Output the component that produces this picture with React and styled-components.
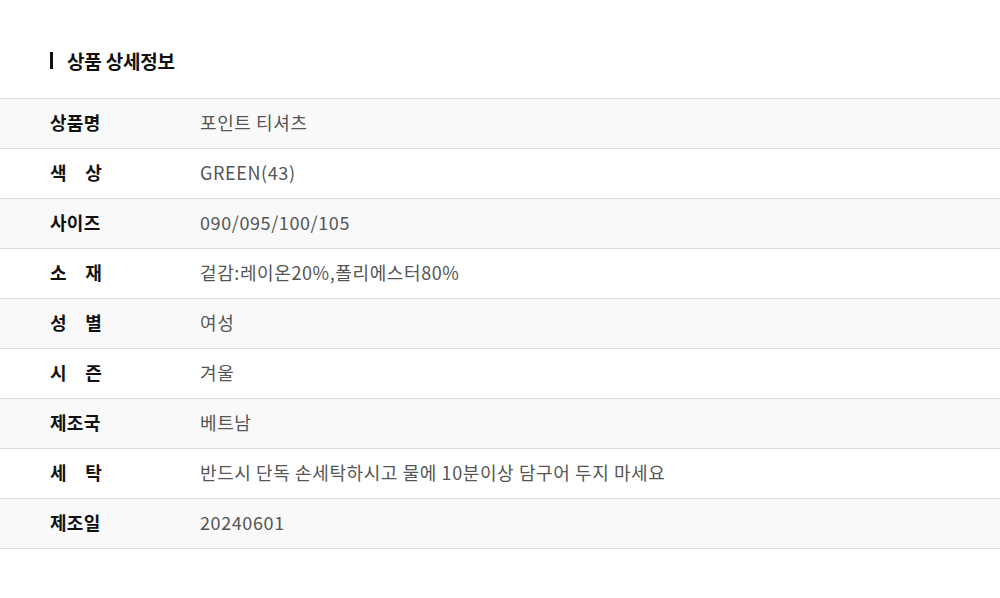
import React from 'react'
import styled, { createGlobalStyle } from 'styled-components'

const GlobalStyle = createGlobalStyle`
  body {
    margin: 0;
    background: #fff;
    font-family: 'Noto Sans CJK KR', 'Noto Sans', sans-serif;
  }
`

const rows = [
  ['상품명', '포인트 티셔츠'],
  ['색 상', 'GREEN(43)'],
  ['사이즈', '090/095/100/105'],
  ['소 재', '겉감:레이온20%,폴리에스터80%'],
  ['성 별', '여성'],
  ['시 즌', '겨울'],
  ['제조국', '베트남'],
  ['세 탁', '반드시 단독 손세탁하시고 물에 10분이상 담구어 두지 마세요'],
  ['제조일', '20240601'],
]

const App = () => {
  return (
    <React.Fragment>
      <GlobalStyle />
      <Wrap>
        <Title>상품 상세정보</Title>
        <Table>
          {rows.map(([label, value], i) => (
            <Row key={label} $striped={i % 2 === 0}>
              <Label>{label}</Label>
              <Value>{value}</Value>
            </Row>
          ))}
        </Table>
      </Wrap>
    </React.Fragment>
  )
}

const Wrap = styled.div`
  width: 1000px;
  height: 598px;
  padding-top: 46px;
  box-sizing: border-box;
`

const Title = styled.h2`
  display: flex;
  align-items: center;
  margin: 0 0 24px 50px;
  height: 28px;
  font-size: 19px;
  font-weight: 700;
  color: #111;
  letter-spacing: -0.2px;

  &::before {
    content: '';
    width: 3px;
    height: 17px;
    background: #111;
    margin-right: 14px;
  }
`

const Table = styled.div`
  border-top: 1px solid #ddd;
`

const Row = styled.div`
  display: flex;
  align-items: center;
  height: 50px;
  box-sizing: border-box;
  padding: 0 0 4px 50px;
  border-bottom: 1px solid #ddd;
  background: ${(p) => (p.$striped ? '#f9f9f9' : '#fff')};
`

const Label = styled.div`
  width: 52px;
  margin-right: 98px;
  font-size: 18px;
  font-weight: 700;
  color: #111;
  text-align: justify;
  text-align-last: justify;
  letter-spacing: 0.3px;
  white-space: nowrap;
`

const Value = styled.div`
  font-size: 18px;
  color: #555;
  letter-spacing: 0.6px;
`

export default App
